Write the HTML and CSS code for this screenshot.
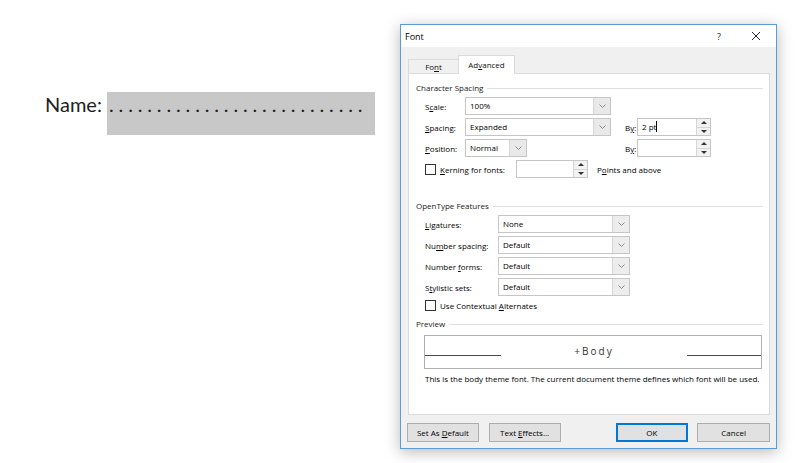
FILE: index.html
```html
<!DOCTYPE html>
<html>
<head>
<meta charset="utf-8">
<link rel="stylesheet" href="styles.css">
</head>
<body>
<div class="page">
  <div class="doc">
    <div class="field">
      <span class="name">Name:</span>
      <span class="fill"><span class="dots">...........................</span></span>
    </div>
  </div>

  <div class="dialog">
    <div class="titlebar">
      <span class="title">Font</span>
      <span class="help">?</span>
      <span class="close">
        <svg width="10" height="10" viewBox="0 0 10 10"><path d="M1 1 L9 9 M9 1 L1 9" stroke="#222" stroke-width="1" fill="none"/></svg>
      </span>
    </div>
    <div class="client">
      <div class="tabs">
        <div class="tab">Fo<u>n</u>t</div>
        <div class="tab active">Ad<u>v</u>anced</div>
      </div>
      <div class="panel">
        <div class="ghead"><span>Character Spacing</span><span class="rule"></span></div>

        <div class="row first">
          <span class="lbl w40">S<u>c</u>ale:</span>
          <div class="combo w146"><span class="val">100%</span><span class="arrow"><svg width="7" height="4" viewBox="0 0 7 4"><path d="M0.5 0.5 L3.5 3.5 L6.5 0.5" stroke="#8a8a8a" fill="none"/></svg></span></div>
        </div>
        <div class="row">
          <span class="lbl w40"><u>S</u>pacing:</span>
          <div class="combo w146"><span class="val">Expanded</span><span class="arrow"><svg width="7" height="4" viewBox="0 0 7 4"><path d="M0.5 0.5 L3.5 3.5 L6.5 0.5" stroke="#8a8a8a" fill="none"/></svg></span></div>
          <span class="lbl by">B<u>y</u>:</span>
          <div class="spinbox w74"><span class="val">2 pt<span class="caret"></span></span><span class="spin"><span class="up"></span><span class="down"></span></span></div>
        </div>
        <div class="row">
          <span class="lbl w40"><u>P</u>osition:</span>
          <div class="combo w62"><span class="val">Normal</span><span class="arrow"><svg width="7" height="4" viewBox="0 0 7 4"><path d="M0.5 0.5 L3.5 3.5 L6.5 0.5" stroke="#8a8a8a" fill="none"/></svg></span></div>
          <span class="lbl by2">B<u>y</u>:</span>
          <div class="spinbox w74"><span class="val"></span><span class="spin"><span class="up"></span><span class="down"></span></span></div>
        </div>
        <div class="row">
          <span class="check"></span>
          <span class="lbl kern"><u>K</u>erning for fonts:</span>
          <div class="spinbox w72"><span class="val"></span><span class="spin"><span class="up"></span><span class="down"></span></span></div>
          <span class="lbl pts">P<u>o</u>ints and above</span>
        </div>

        <div class="ghead second"><span>OpenType Features</span><span class="rule"></span></div>

        <div class="row first">
          <span class="lbl w73"><u>L</u>igatures:</span>
          <div class="combo w132 gray"><span class="val">None</span><span class="arrow"><svg width="7" height="4" viewBox="0 0 7 4"><path d="M0.5 0.5 L3.5 3.5 L6.5 0.5" stroke="#8a8a8a" fill="none"/></svg></span></div>
        </div>
        <div class="row">
          <span class="lbl w73">Nu<u>m</u>ber spacing:</span>
          <div class="combo w132 gray"><span class="val">Default</span><span class="arrow"><svg width="7" height="4" viewBox="0 0 7 4"><path d="M0.5 0.5 L3.5 3.5 L6.5 0.5" stroke="#8a8a8a" fill="none"/></svg></span></div>
        </div>
        <div class="row">
          <span class="lbl w73">Number <u>f</u>orms:</span>
          <div class="combo w132 gray"><span class="val">Default</span><span class="arrow"><svg width="7" height="4" viewBox="0 0 7 4"><path d="M0.5 0.5 L3.5 3.5 L6.5 0.5" stroke="#8a8a8a" fill="none"/></svg></span></div>
        </div>
        <div class="row">
          <span class="lbl w73">S<u>t</u>ylistic sets:</span>
          <div class="combo w132 gray"><span class="val">Default</span><span class="arrow"><svg width="7" height="4" viewBox="0 0 7 4"><path d="M0.5 0.5 L3.5 3.5 L6.5 0.5" stroke="#8a8a8a" fill="none"/></svg></span></div>
        </div>
        <div class="row crow">
          <span class="check"></span>
          <span class="lbl kern">Use Contextual <u>A</u>lternates</span>
        </div>

        <div class="ghead third"><span>Preview</span><span class="rule"></span></div>
        <div class="preview">
          <div class="pv-row">
            <span class="seg left"></span>
            <span class="pv-text">+Body</span>
            <span class="seg right"></span>
          </div>
        </div>
        <div class="desc">This is the body theme font. The current document theme defines which font will be used.</div>
      </div>

      <div class="buttons">
        <div class="btn first">Set As <u>D</u>efault</div>
        <div class="btn fx">Text <u>E</u>ffects...</div>
        <div class="btn ok">OK</div>
        <div class="btn cancel">Cancel</div>
      </div>
    </div>
  </div>
</div>
</body>
</html>
```

FILE: styles.css
```css
* { box-sizing: border-box; }

body {
  margin: 0;
  background: #ffffff;
  font-family: "Open Sans", "Noto Sans", sans-serif;
}

.page {
  display: flex;
  align-items: flex-start;
  height: 463px;
  overflow: hidden;
}

/* document side */
.doc {
  width: 400px;
  padding: 92px 0 0 45px;
}

.field {
  display: flex;
  align-items: flex-start;
}

.name {
  width: 62px;
  font-family: "Lato", "Open Sans", sans-serif;
  font-size: 20px;
  line-height: 24px;
  color: #1e1e1e;
}

.fill {
  width: 268px;
  height: 43px;
  background: #c8c8c8;
  padding-left: 2px;
}

.dots {
  font-family: "Lato", "Open Sans", sans-serif;
  font-size: 20px;
  line-height: 24px;
  letter-spacing: 4.85px;
  color: #222222;
}

/* dialog */
.dialog {
  margin-top: 24px;
  width: 377px;
  height: 425px;
  border: 1px solid #5a9bd8;
  background: #f0f0f0;
  box-shadow: 0 3px 14px rgba(0, 0, 0, 0.28);
  font-size: 8px;
  color: #000;
  display: flex;
  flex-direction: column;
}

.titlebar {
  height: 22px;
  background: #ffffff;
  display: flex;
  align-items: center;
  padding-left: 4px;
  font-size: 9px;
}

.title { flex: 1; color: #000; }

.help {
  width: 10px;
  text-align: center;
  margin-right: 27px;
  color: #222;
}

.close {
  width: 10px;
  height: 10px;
  margin-right: 15px;
  display: flex;
}

.client {
  flex: 1;
  padding: 8px 6px 0 7px;
  display: flex;
  flex-direction: column;
}

.tabs {
  display: flex;
  align-items: flex-end;
  height: 18px;
  position: relative;
  z-index: 1;
}

.tab {
  height: 14px;
  line-height: 13px;
  width: 50px;
  text-align: center;
  border: 1px solid #dadada;
  border-bottom: none;
  border-right: none;
  background: #f0f0f0;
  color: #111;
}

.tab.active {
  height: 19px;
  width: 57px;
  margin-bottom: -1px;
  background: #ffffff;
  border-right: 1px solid #dadada;
  line-height: 17px;
}

.panel {
  height: 342px;
  background: #ffffff;
  border: 1px solid #dadada;
  padding: 7px 6px 0 7px;
  display: flex;
  flex-direction: column;
}

.ghead {
  display: flex;
  align-items: center;
  height: 14px;
  line-height: 14px;
  gap: 4px;
  color: #1a1a1a;
}

.ghead .rule {
  flex: 1;
  height: 1px;
  background: #e0e0e0;
}

.ghead.second { margin-top: 21px; }
.ghead.third { margin-top: 5px; }

.row {
  display: flex;
  align-items: center;
  height: 18px;
  margin-top: 3px;
  padding-left: 9px;
}

.row.first { margin-top: 2px; }
.row.crow { height: 14px; margin-top: 2px; }

.lbl { white-space: nowrap; color: #000; }
.w40 { width: 40px; }
.w73 { width: 73px; }
.by { width: 12px; margin-left: 14px; }
.by2 { width: 12px; margin-left: 98px; }
.kern { margin-left: 4px; width: 76px; }
.crow .kern { width: auto; }
.pts { margin-left: 9px; }

.combo, .spinbox {
  display: flex;
  height: 18px;
  border: 1px solid #c6c6c6;
  background: #ffffff;
}

.w146 { width: 146px; }
.w62 { width: 62px; }
.w74 { width: 74px; }
.w72 { width: 72px; }
.w132 { width: 132px; }

.val {
  flex: 1;
  padding-left: 4px;
  line-height: 16px;
  color: #000;
  position: relative;
}

.caret {
  display: inline-block;
  width: 1px;
  height: 11px;
  background: #000;
  vertical-align: -2px;
}

.arrow {
  width: 17px;
  border-left: 1px solid #d6d6d6;
  background: #e9e9e9;
  display: flex;
  align-items: center;
  justify-content: center;
}

.combo.gray .arrow { background: #ededed; }

.spin {
  width: 14px;
  border-left: 1px solid #d6d6d6;
  background: #f2f2f2;
  display: flex;
  flex-direction: column;
}

.spin .up, .spin .down {
  flex: 1;
  display: flex;
  align-items: center;
  justify-content: center;
}

.spin .up { border-bottom: 1px solid #d6d6d6; }

.spin .up::before {
  content: "";
  border-left: 3px solid transparent;
  border-right: 3px solid transparent;
  border-bottom: 3px solid #333;
}

.spin .down::before {
  content: "";
  border-left: 3px solid transparent;
  border-right: 3px solid transparent;
  border-top: 3px solid #333;
}

.check {
  width: 11px;
  height: 11px;
  border: 1px solid #333;
  background: #fff;
  flex: none;
}

.preview {
  margin: 4px 1px 0 8px;
  height: 34px;
  border: 1px solid #b0b0b0;
}

.pv-row {
  display: flex;
  align-items: flex-end;
  height: 20px;
}

.seg {
  height: 1px;
  background: #4a4a4a;
}

.seg.left { width: 76px; }
.seg.right { width: 74px; }

.pv-text {
  flex: 1;
  text-align: center;
  font-size: 10px;
  letter-spacing: 2px;
  line-height: 12px;
  margin-bottom: -1px;
  color: #333;
}

.desc {
  margin: 3px 0 0 9px;
  line-height: 14px;
  white-space: nowrap;
  color: #000;
}

.buttons {
  display: flex;
  margin-top: 8px;
  margin-left: -1px;
}

.btn {
  width: 72px;
  height: 19px;
  line-height: 17px;
  text-align: center;
  background: #e1e1e1;
  border: 1px solid #adadad;
  color: #000;
}

.btn.fx { margin-left: 10px; }
.btn.ok {
  margin-left: 55px;
  width: 73px;
  border: 1px solid #0078d7;
  box-shadow: inset 0 0 0 1px #0078d7;
}
.btn.cancel { margin-left: 9px; width: 73px; }
```
